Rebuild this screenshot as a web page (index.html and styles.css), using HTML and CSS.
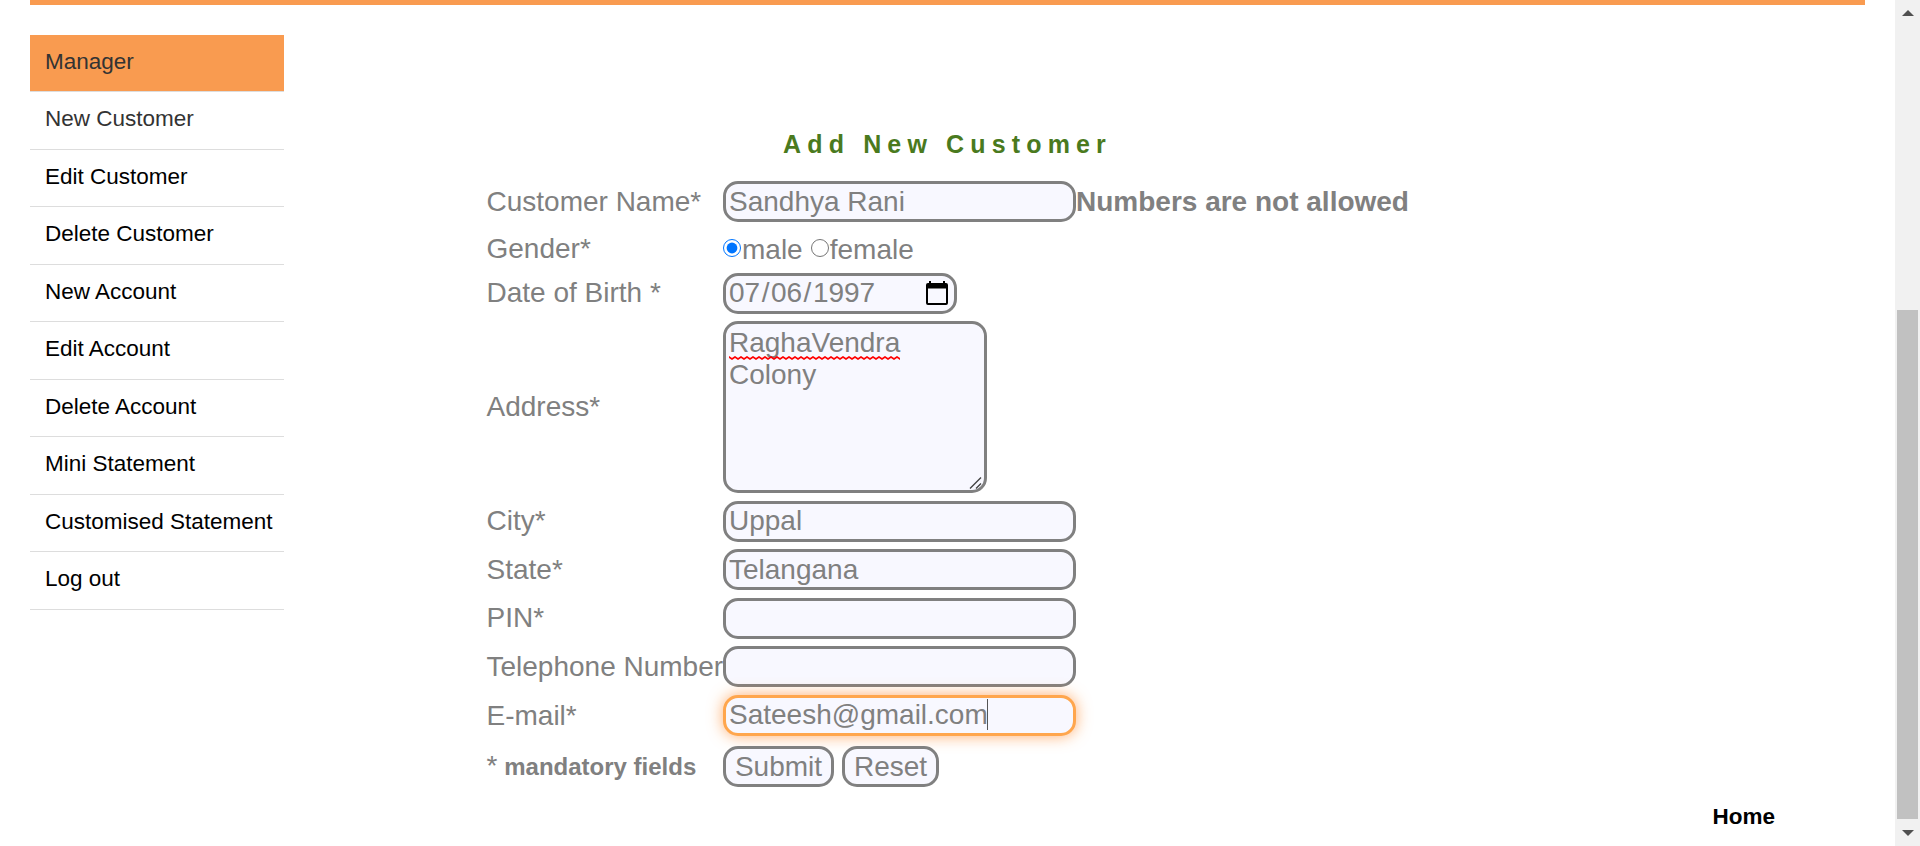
FILE: index.html
```html
<!DOCTYPE html>
<html lang="en">
<head>
<meta charset="utf-8">
<title>Add New Customer</title>
<link rel="stylesheet" href="styles.css">
</head>
<body>
<div class="page">
  <div class="rule"></div>
  <div class="columns">
    <ul class="menu">
      <li class="orange"><a>Manager</a></li>
      <li class="hovered"><a>New Customer</a></li>
      <li><a>Edit Customer</a></li>
      <li><a>Delete Customer</a></li>
      <li><a>New Account</a></li>
      <li><a>Edit Account</a></li>
      <li><a>Delete Account</a></li>
      <li><a>Mini Statement</a></li>
      <li><a>Customised Statement</a></li>
      <li><a>Log out</a></li>
    </ul>
    <form class="form">
      <h1 class="heading">Add New Customer</h1>
      <div class="row"><label class="label">Customer Name*</label><input class="field" value="Sandhya Rani"><b class="error">Numbers are not allowed</b></div>
      <div class="row gender"><label class="label">Gender*</label><input class="radio" type="radio" name="gender" checked><span class="option">male</span><input class="radio" type="radio" name="gender"><span class="option">female</span></div>
      <div class="row date-row"><label class="label raised">Date of Birth *</label>
        <div class="field date"><span>07</span><span class="slash">/</span><span>06</span><span class="slash">/</span><span>1997</span>
          <svg class="calendar" width="22" height="24" viewBox="0 0 22 24"><path fill="#000" fill-rule="evenodd" d="M3 0h2v2h12V0h2v2h1a2 2 0 0 1 2 2v18a2 2 0 0 1-2 2H2a2 2 0 0 1-2-2V4a2 2 0 0 1 2-2h1zM2 7.500v14.500h18V7.500z"/></svg>
        </div></div>
      <div class="row address-row"><label class="label">Address*</label>
        <div class="field address"><span class="misspelt">RaghaVendra<svg class="wave" width="171" height="4"><defs><pattern id="wave" width="6" height="4" patternUnits="userSpaceOnUse"><path d="M-3 3 0 1 3 3 6 1 9 3" fill="none" stroke="#f00" stroke-width="1.7"/></pattern></defs><rect width="171" height="4" fill="url(#wave)"/></svg></span><span>Colony</span>
          <svg class="grip" width="14" height="14" viewBox="0 0 14 14"><path d="M1 12.500 12 1.500M7 12.500l5-5" fill="none" stroke="#444" stroke-width="1.4"/></svg>
        </div></div>
      <div class="row city"><label class="label raised">City*</label><input class="field raised-text" value="Uppal"></div>
      <div class="row state"><label class="label">State*</label><input class="field" value="Telangana"></div>
      <div class="row pin"><label class="label raised">PIN*</label><input class="field"></div>
      <div class="row phone"><label class="label">Telephone Number</label><input class="field"></div>
      <div class="row email"><label class="label">E-mail*</label><div class="field focused">Sateesh@gmail.com<i class="caret"></i></div></div>
      <div class="row actions"><div class="label">* <b class="note">mandatory fields</b></div><button type="button" class="button submit">Submit</button><button type="button" class="button reset">Reset</button></div>
      <a class="home">Home</a>
    </form>
  </div>
</div>
<div class="scrollbar">
  <svg width="12" height="6" viewBox="0 0 12 6"><path d="M0 6 6 0l6 6z" fill="#505050"/></svg>
  <div class="thumb"></div>
  <svg width="12" height="6" viewBox="0 0 12 6"><path d="M0 0h12L6 6z" fill="#505050"/></svg>
</div>
</body>
</html>
```
FILE: styles.css
```css
* { box-sizing: border-box; }
body {
  margin: 0;
  height: 846px;
  display: flex;
  overflow: hidden;
  background: #fff;
  font-family: "Liberation Sans", Arial, sans-serif;
}
.page { width: 1895px; padding: 0 30px; }
.rule { height: 5px; background: #f99b50; }
.columns { display: flex; padding-top: 30px; }
.menu {
  list-style: none;
  margin: 0;
  padding: 0;
  width: 254px;
  font-size: 22.5px;
  line-height: 27px;
  color: #000;
}
.menu li {
  height: 57.5px;
  padding: 13px 0 0 15px;
  border-bottom: 1px solid #ddd;
  white-space: nowrap;
}
.menu .orange { background: #f99b50 padding-box; color: #333; height: 57px; }
.menu .hovered { color: #333; }
.form { margin-left: 202px; width: 1349px; color: #808080; font-size: 28px; }
.heading {
  margin: 94px 0 0 297px;
  height: 31px;
  font-size: 25px;
  line-height: 31px;
  letter-spacing: 6.15px;
  color: #4a7a1e;
  white-space: nowrap;
}
.row { display: flex; align-items: center; height: 41px; margin-top: 7px; line-height: 32px; white-space: nowrap; }
.form .heading + .row { margin-top: 21px; }
.label { width: 237px; padding-left: .5px; flex: none; }
.raised { padding-bottom: 2px; }
.field {
  display: block;
  width: 353px;
  height: 41px;
  margin: 0;
  padding: 0 3px;
  flex: none;
  border: 3px solid #808080;
  border-radius: 15px;
  background: #f8f8ff;
  color: #808080;
  font: 28px/34px "Liberation Sans", Arial, sans-serif;
  outline: none;
}
.raised-text { padding-bottom: 2px; }
.form .gender { height: 34px; margin-top: 10px; }
.radio { width: 18px; height: 18px; margin: 0 1px 2px 0; flex: none; }
.option { margin-right: 8px; padding-top: 1px; }
.form .date-row { margin-top: 7px; }
.date { width: 234px; display: flex; align-items: center; padding-bottom: 1px; }
.slash { padding: 0 1.5px; }
.calendar { margin: 0 3px 1px auto; }
.form .address-row { height: 172px; }
.address { position: relative; width: 264px; height: 172px; padding-top: 3px; line-height: 32px; }
.address > span { display: block; }
.misspelt { position: relative; width: 171px; }
.wave { position: absolute; left: 0; bottom: -1px; }
.grip { position: absolute; right: 1px; bottom: 0; }
.form .city, .form .pin, .form .email { margin-top: 8px; }
.focused {
  display: flex;
  align-items: center;
  padding-bottom: 2px;
  border-color: #ffa64d;
  box-shadow: 0 0 15px rgba(255, 140, 50, .7);
}
.caret { width: 1px; height: 31px; margin-left: -1px; background: #555; }
.form .actions { margin-top: 10px; }
.note { margin-left: -1px; font-size: 24px; }
.button {
  height: 41px;
  padding: 0;
  border: 3px solid #808080;
  border-radius: 15px;
  background: #f8f8ff;
  color: #808080;
  font: 28px/32px "Liberation Sans", Arial, sans-serif;
}
.submit { width: 111px; }
.reset { width: 97px; margin-left: 8px; }
.home {
  display: block;
  margin: 16px 0 0 1226.5px;
  font-size: 22.5px;
  line-height: 28px;
  font-weight: bold;
  color: #000;
}
.scrollbar {
  width: 25px;
  height: 846px;
  padding: 10px 0;
  display: flex;
  flex-direction: column;
  align-items: center;
  justify-content: space-between;
  background: #f1f1f1;
}
.thumb { width: 21px; height: 509px; margin-top: 283px; background: #c1c1c1; }
```
